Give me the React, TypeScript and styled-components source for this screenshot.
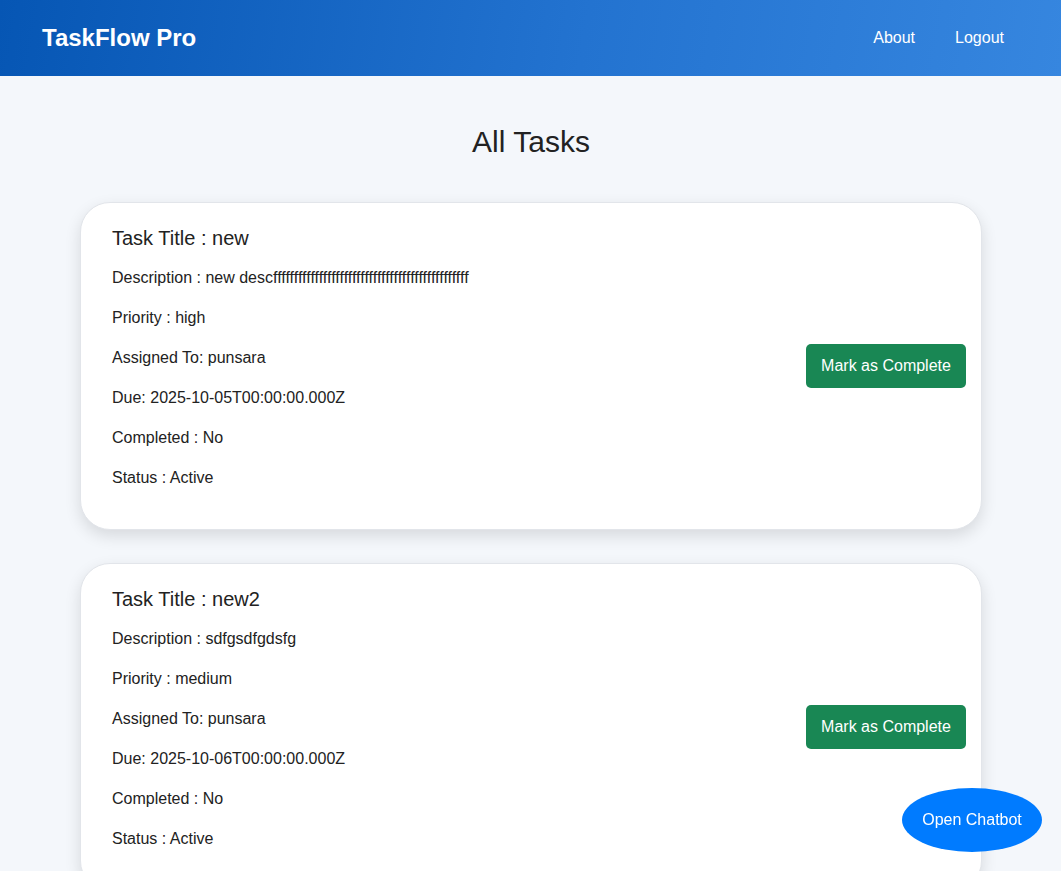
import React from "react";
import styled, { createGlobalStyle } from "styled-components";

const GlobalStyle = createGlobalStyle`
  html, body { margin: 0; padding: 0; }
  body {
    background: #f4f7fb;
    font-family: "Liberation Sans", Arial, sans-serif;
    color: #222;
  }
`;

const Nav = styled.nav`
  height: 76px;
  box-sizing: border-box;
  display: flex;
  align-items: center;
  justify-content: space-between;
  padding: 0 57px 0 42px;
  background: linear-gradient(100deg, #0656b4 0%, #2373d0 55%, #3686df 100%);
  color: #fff;
`;

const Brand = styled.div`
  font-size: 24px;
  font-weight: 700;
`;

const NavLinks = styled.div`
  display: flex;
  gap: 40px;
`;

const NavLink = styled.a`
  color: #fff;
  font-size: 16px;
  text-decoration: none;
  cursor: pointer;
`;

const Main = styled.main`
  padding: 48px 79px 40px 80px;
`;

const Heading = styled.h2`
  margin: 0 0 42px;
  text-align: center;
  font-size: 30px;
  font-weight: 400;
  line-height: 36px;
  color: #222;
`;

const List = styled.div`
  display: flex;
  flex-direction: column;
  gap: 33px;
`;

const Card = styled.div`
  box-sizing: border-box;
  background: #fff;
  border: 1px solid #e2e5ea;
  border-radius: 30px;
  box-shadow: 0 6px 16px rgba(0, 0, 0, 0.12);
  padding: 0 15px 0 31px;
  display: flex;
  align-items: center;
  justify-content: space-between;
`;

const Info = styled.div`
  display: flex;
  flex-direction: column;
  padding: 22px 0 31px;
`;

const Title = styled.h3`
  margin: 0 0 7px;
  font-size: 20px;
  font-weight: 400;
  line-height: 26px;
  color: #222;
`;

const Line = styled.p`
  margin: 0;
  font-size: 16px;
  line-height: 40px;
  color: #222;
`;

const CompleteButton = styled.button`
  width: 160px;
  height: 44px;
  border: none;
  border-radius: 5px;
  background: #198754;
  color: #fff;
  font-family: "Liberation Sans", Arial, sans-serif;
  font-size: 16px;
  cursor: pointer;
`;

const ChatButton = styled.button`
  position: fixed;
  right: 19px;
  bottom: 19px;
  width: 140px;
  height: 64px;
  border: none;
  border-radius: 50%;
  background: #007bff;
  color: #fff;
  font-family: "Liberation Sans", Arial, sans-serif;
  font-size: 16px;
  cursor: pointer;
`;

type Task = {
  title: string;
  description: string;
  priority: string;
  assigned: string;
  due: string;
  completed: string;
  status: string;
};

const tasks: Task[] = [
  {
    title: "new",
    description: "new descfffffffffffffffffffffffffffffffffffffffffffffff",
    priority: "high",
    assigned: "punsara",
    due: "2025-10-05T00:00:00.000Z",
    completed: "No",
    status: "Active",
  },
  {
    title: "new2",
    description: "sdfgsdfgdsfg",
    priority: "medium",
    assigned: "punsara",
    due: "2025-10-06T00:00:00.000Z",
    completed: "No",
    status: "Active",
  },
];

export default function App() {
  return (
    <>
      <GlobalStyle />
      <Nav>
        <Brand>TaskFlow Pro</Brand>
        <NavLinks>
          <NavLink>About</NavLink>
          <NavLink>Logout</NavLink>
        </NavLinks>
      </Nav>
      <Main>
        <Heading>All Tasks</Heading>
        <List>
          {tasks.map((t) => (
            <Card key={t.title}>
              <Info>
                <Title>Task Title : {t.title}</Title>
                <Line>Description : {t.description}</Line>
                <Line>Priority : {t.priority}</Line>
                <Line>Assigned To: {t.assigned}</Line>
                <Line>Due: {t.due}</Line>
                <Line>Completed : {t.completed}</Line>
                <Line>Status : {t.status}</Line>
              </Info>
              <CompleteButton>Mark as Complete</CompleteButton>
            </Card>
          ))}
        </List>
      </Main>
      <ChatButton>Open Chatbot</ChatButton>
    </>
  );
}
